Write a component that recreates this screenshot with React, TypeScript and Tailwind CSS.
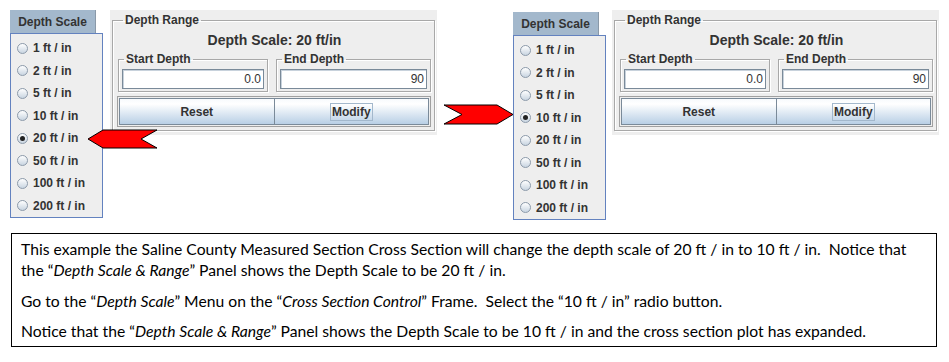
const scales = ["1 ft / in", "2 ft / in", "5 ft / in", "10 ft / in", "20 ft / in", "50 ft / in", "100 ft / in", "200 ft / in"];

const uiFont = { fontFamily: '"Liberation Sans", Arial, sans-serif' };

function Radio({ checked }: { checked: boolean }) {
  return (
    <span className="flex h-[11px] w-[11px] shrink-0 items-center justify-center rounded-full border border-[#8c9aaa] bg-gradient-to-b from-white to-[#c9d5e1]">
      {checked && <span className="h-[5px] w-[5px] rounded-full bg-[#222]" />}
    </span>
  );
}

function ScaleMenu({ selected }: { selected: string }) {
  return (
    <div className="flex w-[93px] flex-col">
      <div className="flex h-[23px] w-[86px] items-center justify-center border-r border-[#8a99a8] bg-[#a3b8cc] text-[12px] font-bold text-[#333]">
        Depth Scale
      </div>
      <div className="flex flex-col border border-[#6382bf] bg-[#eeeeee] pt-[3px]">
        {scales.map((s) => (
          <div key={s} className="flex h-[22.5px] items-center gap-[5px] pl-[6px] text-[12px] font-bold text-[#333]">
            <Radio checked={s === selected} />
            {s}
          </div>
        ))}
      </div>
    </div>
  );
}

function GroupBox({ title, className, children }: { title: string; className?: string; children: React.ReactNode }) {
  return (
    <fieldset className={"border border-[#a8a8a8] shadow-[inset_1px_1px_0_#fff,1px_1px_0_#fff] " + (className ?? "")}>
      <legend className="ml-[5px] px-[2px] text-[12px] font-bold leading-[14px] text-[#333]">{title}</legend>
      {children}
    </fieldset>
  );
}

function Field({ value }: { value: string }) {
  return (
    <div className="mx-[3px] mt-[3px] mb-[2px] flex h-[20px] items-center justify-end border border-[#7a8a99] bg-white pr-[2px] text-[12px] text-[#333] shadow-[inset_1px_1px_0_#c8d2dc]">
      {value}
    </div>
  );
}

function DepthPanel() {
  return (
    <div className="h-[125px] w-[327px] bg-[#eeeeee] px-[2px] pt-[3px]">
      <GroupBox title="Depth Range" className="h-[118px] pl-[5px] pr-[3px]">
        <div className="mt-[5px] text-center text-[14px] font-bold leading-[16px] text-[#333]">Depth Scale: 20 ft/in</div>
        <div className="mt-[4px] flex gap-[8px]">
          <GroupBox title="Start Depth" className="w-[150px]">
            <Field value="0.0" />
          </GroupBox>
          <GroupBox title="End Depth" className="flex-1">
            <Field value="90" />
          </GroupBox>
        </div>
        <div className="mt-[4px] ml-[-1px] flex h-[31px] border border-[#a0a0a0] p-px">
          <button className="flex flex-1 items-center justify-center border border-[#7a8a99] bg-gradient-to-b from-[#f7fafd] via-white via-20% to-[#b8cfe5] text-[12px] font-bold text-[#333]">
            Reset
          </button>
          <button className="flex flex-1 items-center justify-center border border-l-0 border-[#7a8a99] bg-gradient-to-b from-[#f7fafd] via-white via-20% to-[#b8cfe5] text-[12px] font-bold text-[#333]">
            <span className="border border-[#a3b8cc] px-[1px] leading-[16px]">Modify</span>
          </button>
        </div>
      </GroupBox>
    </div>
  );
}

export default function App() {
  return (
    <div className="relative h-[362px] w-[949px] overflow-hidden bg-white">
      <div className="flex h-[223px] pl-[10px] pt-[10px]" style={uiFont}>
        <ScaleMenu selected="20 ft / in" />
        <div className="ml-[7px]">
          <DepthPanel />
        </div>
        <div className="ml-[76px] mt-[2px]">
          <ScaleMenu selected="10 ft / in" />
        </div>
        <div className="ml-[6px]">
          <DepthPanel />
        </div>
      </div>

      <svg className="absolute left-0 top-0" width="949" height="223" viewBox="0 0 949 223">
        <polygon points="88,139 103,130 157,130 141,139 157,148 103,148" fill="#ff0000" stroke="#000" strokeWidth="1" />
        <polygon points="444,105 497,105 513,114.5 497,124 444,124 462,114.5" fill="#ff0000" stroke="#000" strokeWidth="1" />
      </svg>

      <div
        className="ml-[11px] mt-[10px] h-[114px] w-[926px] border border-black pl-[9px] pt-[5px] text-[15.7px] leading-[21px] text-black"
        style={{ fontFamily: 'Lato, "Open Sans", sans-serif' }}
      >
        <p>
          This example the Saline County Measured Section Cross Section will change the depth scale of 20 ft / in to 10 ft / in.{"\u00a0 "}Notice that
          <br />
          the “<i>Depth Scale &amp; Range</i>” Panel shows the Depth Scale to be 20 ft / in.
        </p>
        <p className="mt-[10px]">
          Go to the “<i>Depth Scale</i>” Menu on the “<i>Cross Section Control</i>” Frame.{"\u00a0 "}Select the “10 ft / in” radio button.
        </p>
        <p className="mt-[9px]">
          Notice that the “<i>Depth Scale &amp; Range</i>” Panel shows the Depth Scale to be 10 ft / in and the cross section plot has expanded.
        </p>
      </div>
    </div>
  );
}
